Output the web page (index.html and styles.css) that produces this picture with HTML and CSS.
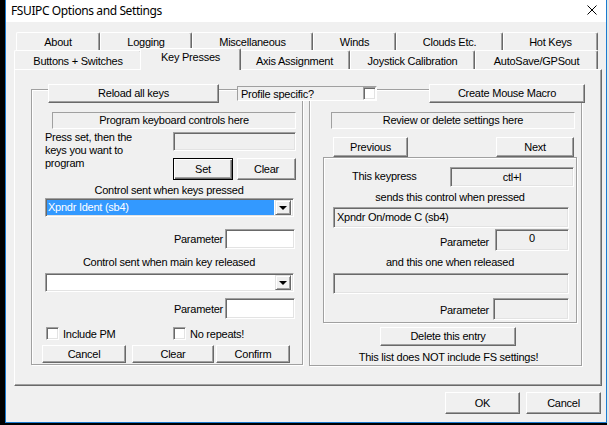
FILE: index.html
```html
<!DOCTYPE html>
<html>
<head>
<meta charset="utf-8">
<link rel="stylesheet" href="styles.css">
</head>
<body>
<div class="screen">
  <div class="strip"></div>
  <div class="window">
    <div class="titlebar">
      <span class="title">FSUIPC Options and Settings</span>
      <svg class="close" width="10" height="10" viewBox="0 0 10 10"><path d="M0.5 0.5 L9.5 9.5 M9.5 0.5 L0.5 9.5" stroke="#000" stroke-width="1" fill="none"/></svg>
    </div>
    <div class="client">
      <div class="tabs">
        <div class="tabrow row1">
          <div class="tab w-about">About</div>
          <div class="tab w-logging">Logging</div>
          <div class="tab w-misc">Miscellaneous</div>
          <div class="tab w-winds">Winds</div>
          <div class="tab w-clouds">Clouds Etc.</div>
          <div class="tab w-hot">Hot Keys</div>
        </div>
        <div class="tabrow row2">
          <div class="tab w-buttons">Buttons + Switches</div>
          <div class="tab w-keys selected">Key Presses</div>
          <div class="tab w-axis">Axis Assignment</div>
          <div class="tab w-joy">Joystick Calibration</div>
          <div class="tab w-auto">AutoSave/GPSout</div>
        </div>
      </div>
      <div class="page">
        <div class="header">
          <div class="btn reload">Reload all keys</div>
          <div class="profile"><span>Profile specific?</span><span class="check small"></span></div>
          <div class="btn macro">Create Mouse Macro</div>
        </div>
        <div class="groups">
          <div class="group gleft">
            <div class="caption cap-left">Program keyboard controls here</div>
            <div class="setrow">
              <div class="presstext">Press set, then the<br>keys you want to<br>program</div>
              <div class="setcol">
                <div class="edit keyedit"></div>
                <div class="setbtns">
                  <div class="btn set">Set</div>
                  <div class="btn clear1">Clear</div>
                </div>
              </div>
            </div>
            <div class="ctext t1">Control sent when keys pressed</div>
            <div class="combo c1"><div class="sel">Xpndr Ident (sb4)</div><div class="drop"><span class="arrow"></span></div></div>
            <div class="paramrow p1"><span>Parameter</span><div class="edit pedit"></div></div>
            <div class="ctext t2">Control sent when main key released</div>
            <div class="combo c2"><div class="empty"></div><div class="drop"><span class="arrow"></span></div></div>
            <div class="paramrow p2"><span>Parameter</span><div class="edit pedit"></div></div>
            <div class="checks">
              <div class="chk chk1"><span class="check"></span><span>Include PM</span></div>
              <div class="chk chk2"><span class="check"></span><span>No repeats!</span></div>
            </div>
            <div class="bottombtns">
              <div class="btn cancel1">Cancel</div>
              <div class="btn clear2">Clear</div>
              <div class="btn confirm">Confirm</div>
            </div>
          </div>
          <div class="group gright">
            <div class="caption cap-right">Review or delete settings here</div>
            <div class="navrow">
              <div class="btn prev">Previous</div>
              <div class="btn next">Next</div>
            </div>
            <div class="frame">
              <div class="keyrow"><span class="kplabel">This keypress</span><div class="ro kp">ctl+l</div></div>
              <div class="ctext t3">sends this control when pressed</div>
              <div class="ro wide w1">Xpndr On/mode C (sb4)</div>
              <div class="paramrow p3"><span>Parameter</span><div class="ro pval">0</div></div>
              <div class="ctext t4">and this one when released</div>
              <div class="ro wide w2"></div>
              <div class="paramrow p4"><span>Parameter</span><div class="ro pval2"></div></div>
            </div>
            <div class="btn delete">Delete this entry</div>
            <div class="ctext t5">This list does NOT include FS settings!</div>
          </div>
        </div>
      </div>
      <div class="footer">
        <div class="btn ok">OK</div>
        <div class="btn cancel2">Cancel</div>
      </div>
    </div>
  </div>
  <div class="edge"></div>
</div>
</body>
</html>
```

FILE: styles.css
```css
* { box-sizing: border-box; }
html, body { margin: 0; padding: 0; }
body {
  width: 609px;
  height: 425px;
  overflow: hidden;
  font-family: "Liberation Sans", Arial, sans-serif;
  font-size: 11px;
  letter-spacing: -0.25px;
  color: #000;
  background: #000;
}
.screen { display: flex; width: 609px; height: 425px; }
.strip { width: 5px; background: #000; }
.window {
  width: 602px;
  height: 423px;
  border: 1px solid #1a7ad0;
  border-top: none;
  background: #f0f0f0;
  display: flex;
  flex-direction: column;
}
.edge { flex: 1; background: #e6e6e6; }

.titlebar {
  height: 22px;
  background: #fff;
  display: flex;
  align-items: center;
  padding-left: 5px;
}
.title {
  font-family: "Noto Sans", "Segoe UI", sans-serif;
  font-size: 12px;
  letter-spacing: -0.4px;
  flex: 1;
  margin-top: -2px;
}
.close { margin-right: 9px; margin-top: -2px; }

.client { flex: 1; display: flex; flex-direction: column; }

/* tabs */
.tabs { margin-top: 10px; }
.tabrow { display: flex; }
.row1 { height: 18px; margin-left: 10px; }
.row2 { height: 19px; margin-left: 8px; }
.tab {
  border-left: 1px solid #fff;
  border-top: 1px solid #fff;
  border-right: 1px solid #696969;
  box-shadow: inset -1px 0 0 #a0a0a0;
  border-radius: 2px 2px 0 0;
  text-align: center;
  line-height: 16px;
  background: #f0f0f0;
}
.row1 .tab { padding-top: 1px; }
.row2 .tab { padding-top: 2px; }
.w-about { width: 84px; }
.w-logging { width: 92px; }
.w-misc { width: 121px; }
.w-winds { width: 83px; }
.w-clouds { width: 107px; }
.w-hot { width: 95px; }
.w-buttons { width: 128px; }
.w-keys { width: 97px; }
.w-axis { width: 111px; }
.w-joy { width: 125px; }
.w-auto { width: 123px; }
.tab.selected {
  width: 101px;
  margin: -2px -2px -1px -2px;
  height: 22px;
  padding-top: 0;
  position: relative;
  z-index: 2;
}

/* page */
.page {
  margin-left: 8px;
  width: 588px;
  height: 317px;
  border: 1px solid;
  border-color: #fff #696969 #696969 #fff;
  box-shadow: inset -1px -1px 0 #a0a0a0;
  padding: 14px 0 0 16px;
  position: relative;
  z-index: 1;
}
.header {
  display: flex;
  align-items: flex-start;
  margin-left: 17px;
  height: 19px;
  position: relative;
  z-index: 3;
}
.btn {
  background: #f0f0f0;
  border: 1px solid;
  border-color: #fff #696969 #696969 #fff;
  box-shadow: inset -1px -1px 0 #a0a0a0;
  display: flex;
  align-items: center;
  justify-content: center;
  line-height: 13px;
}
.reload { width: 171px; height: 19px; }
.profile {
  margin-left: 18px;
  margin-top: 2px;
  width: 140px;
  height: 15px;
  border: 1px solid;
  border-color: #a0a0a0 #fff #fff #a0a0a0;
  background: #f0f0f0;
  display: flex;
  align-items: center;
  justify-content: space-between;
  padding-left: 3px;
  padding-right: 0;
}
.macro { margin-left: 52px; width: 156px; height: 19px; }

.groups { display: flex; margin-top: -14px; }
.group {
  border: 1px solid #a0a0a0;
  box-shadow: inset 1px 1px 0 #fff, 1px 1px 0 #fff;
  display: flex;
  flex-direction: column;
}
.gleft { width: 272px; height: 276px; padding: 22px 0 0 10px; }
.gright { width: 273px; height: 277px; margin-left: 6px; padding: 22px 0 0 0; }

.caption {
  height: 17px;
  width: 244px;
  border: 1px solid;
  border-color: #a0a0a0 #fff #fff #a0a0a0;
  text-align: center;
  line-height: 15px;
}
.cap-left { margin-left: 10px; }
.cap-right { margin-left: 21px; }

.setrow { display: flex; margin-top: 2px; }
.presstext { margin-left: 3px; width: 128px; line-height: 13px; }
.setcol { display: flex; flex-direction: column; }
.edit {
  background: #fff;
  border: 1px solid;
  border-color: #a0a0a0 #fff #fff #a0a0a0;
  box-shadow: inset 1px 1px 0 #696969, inset -1px -1px 0 #e3e3e3;
}
.keyedit { margin-top: 1px; width: 123px; height: 19px; background: #f0f0f0; }
.setbtns { display: flex; margin-top: 7px; gap: 4px; }
.set { width: 60px; height: 22px; border-color: #000; box-shadow: inset 1px 1px 0 #fff, inset -1px -1px 0 #696969, inset -2px -2px 0 #a0a0a0; }
.clear1 { width: 59px; height: 22px; }

.ctext { text-align: center; height: 13px; line-height: 13px; white-space: nowrap; }
.gleft .ctext { width: 254px; }
.t1 { margin-top: 4px; }
.t2 { margin-top: 7px; }

.combo {
  margin-left: 3px;
  width: 249px;
  height: 19px;
  background: #fff;
  border: 1px solid;
  border-color: #a0a0a0 #fff #fff #a0a0a0;
  box-shadow: inset 1px 1px 0 #696969, inset -1px -1px 0 #e3e3e3;
  display: flex;
  padding: 2px 2px 2px 2px;
}
.c1 { margin-top: 1px; }
.c2 { margin-top: 4px; }
.sel {
  flex: 1;
  background: #3399ff;
  color: #fff;
  line-height: 15px;
  padding-left: 1px;
  margin: -1px 1px -1px -1px;
}
.empty { flex: 1; }
.drop {
  width: 16px;
  margin-top: -1px;
  margin-bottom: -1px;
  background: #f0f0f0;
  border: 1px solid;
  border-color: #e3e3e3 #696969 #696969 #e3e3e3;
  box-shadow: inset 1px 1px 0 #fff, inset -1px -1px 0 #a0a0a0;
  display: flex;
  align-items: center;
  justify-content: center;
}
.arrow {
  width: 0; height: 0;
  border-left: 4px solid transparent;
  border-right: 4px solid transparent;
  border-top: 4px solid #000;
  margin-top: 1px;
}

.paramrow { display: flex; justify-content: flex-end; align-items: center; }
.paramrow span { margin-right: 2px; }
.gleft .paramrow { width: 254px; }
.p1 { margin-top: 12px; height: 20px; }
.p2 { margin-top: 6px; height: 21px; }
.pedit { width: 70px; height: 100%; margin-right: 1px; }

.checks { display: flex; margin-top: 8px; height: 13px; }
.chk { display: flex; align-items: center; gap: 4px; }
.chk1 { margin-left: 4px; width: 127px; }
.check {
  display: inline-block;
  width: 13px;
  height: 13px;
  background: #fff;
  border: 1px solid;
  border-color: #a0a0a0 #fff #fff #a0a0a0;
  box-shadow: inset 1px 1px 0 #696969, inset -1px -1px 0 #e3e3e3;
}
.check.small { width: 13px; height: 13px; margin-top: -1px; margin-right: 0; }

.bottombtns { display: flex; margin-top: 5px; }
.bottombtns .btn { height: 18px; }
.cancel1 { width: 84px; }
.clear2 { width: 82px; margin-left: 6px; }
.confirm { width: 74px; margin-left: 2px; }

/* right group */
.navrow { display: flex; margin-top: 8px; height: 20px; }
.prev { width: 75px; margin-left: 23px; }
.next { width: 78px; margin-left: 88px; }
.frame {
  margin-left: 13px;
  width: 254px;
  height: 166px;
  border: 1px solid #a0a0a0;
  box-shadow: inset 1px 1px 0 #fff, 1px 1px 0 #fff;
  display: flex;
  flex-direction: column;
}
.ro {
  background: #f0f0f0;
  border: 1px solid;
  border-color: #a0a0a0 #fff #fff #a0a0a0;
  box-shadow: inset 1px 1px 0 #696969, inset -1px -1px 0 #e3e3e3;
  line-height: 13px;
}
.keyrow { display: flex; align-items: center; margin-top: 9px; height: 20px; }
.kplabel { margin-left: 28px; width: 98px; margin-top: -3px; }
.kp { width: 124px; height: 20px; text-align: center; padding-top: 3px; }
.frame .ctext { width: 252px; }
.t3 { margin-top: 4px; }
.wide { margin-left: 9px; width: 236px; height: 21px; }
.w1 { margin-top: 3px; padding: 3px 0 0 3px; }
.p3 { margin-top: 1px; height: 22px; width: 245px; }
.p3 span { margin-right: 6px; margin-top: 4px; }
.pval { width: 74px; height: 22px; text-align: center; padding-top: 2px; }
.t4 { margin-top: 5px; }
.w2 { margin-top: 4px; }
.p4 { margin-top: 4px; height: 22px; width: 245px; }
.p4 span { margin-right: 4px; margin-top: 2px; }
.pval2 { width: 76px; height: 22px; }
.delete { margin-top: 4px; margin-left: 70px; width: 136px; height: 19px; }
.gright > .ctext { width: 277px; margin-top: 5px; }

.footer { display: flex; justify-content: flex-end; gap: 6px; margin-top: 6px; margin-right: 5px; }
.footer .btn { width: 75px; height: 22px; }
```
